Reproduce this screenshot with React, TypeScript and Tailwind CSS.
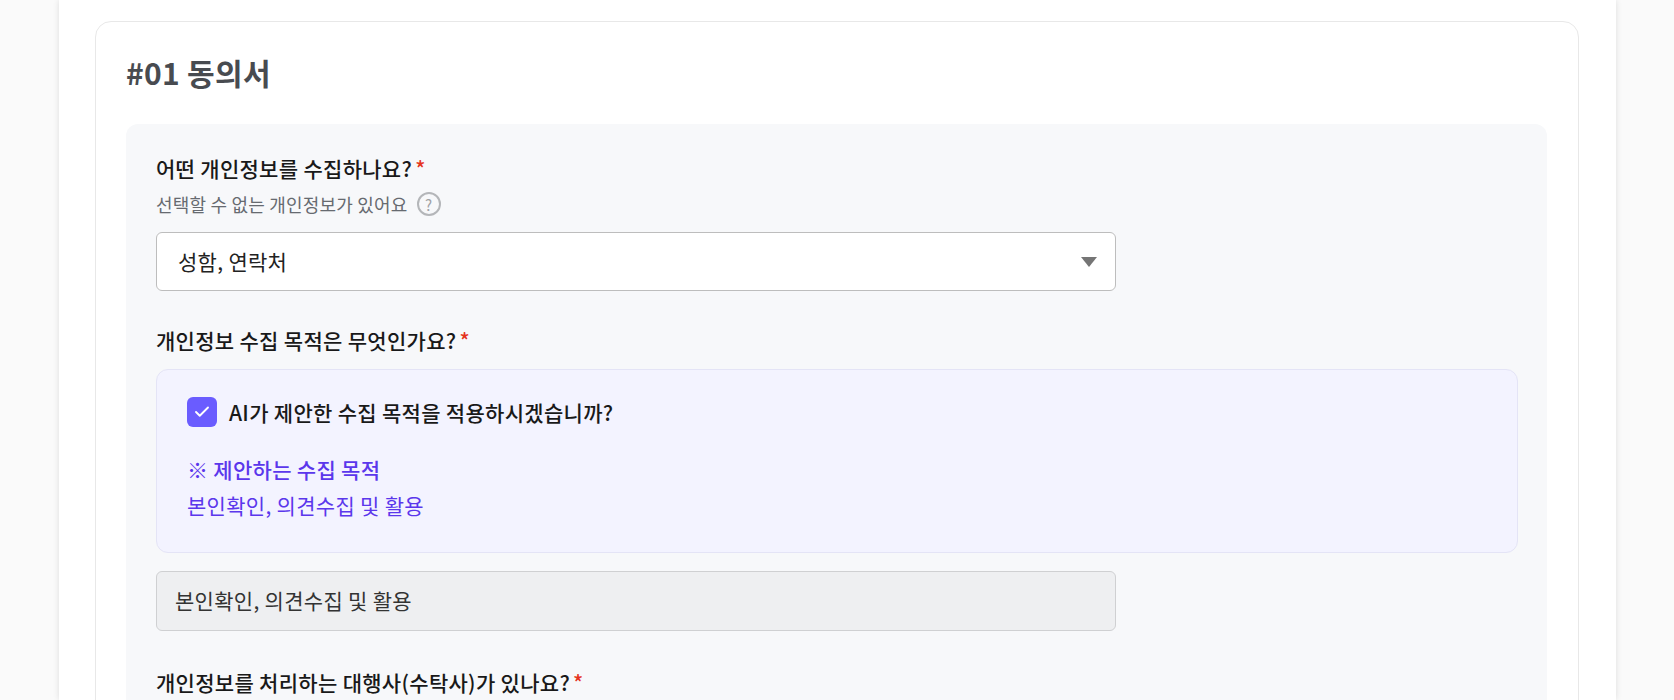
import React from 'react';
import { Check } from 'lucide-react';

const font = { fontFamily: '"Noto Sans CJK KR", "Noto Sans", sans-serif' };

const Label = ({ children }: { children: React.ReactNode }) => (
  <div className="flex items-start text-[21px] leading-[26px] font-medium tracking-[0.3px] text-[#191919]">
    <span>{children}</span>
    <span className="ml-[3px] text-[#e5341d]">*</span>
  </div>
);

const App = () => {
  return (
    <div className="h-[700px] overflow-hidden bg-[#fafafa] pl-[59px]" style={font}>
      <div className="h-[700px] w-[1557px] bg-white px-[36px] pt-[21px] shadow-[0_0_6px_rgba(0,0,0,0.12)]">
        <div className="h-[760px] w-[1484px] rounded-t-[16px] border border-[#e8e8e8] px-[30px] pt-[30px]">
          <h2 className="text-[30px] leading-[40px] font-bold tracking-[0.3px] text-[#484b50]">#01 동의서</h2>

          <div className="mt-[32px] h-[700px] w-[1421px] rounded-t-[12px] bg-[#f7f8fa] px-[30px] pt-[31px]">
            {/* 수집 항목 */}
            <Label>어떤 개인정보를 수집하나요?</Label>
            <div className="mt-[11px] flex h-[24px] items-center text-[18px] tracking-[0.2px] text-[#666a70]">
              <span>선택할 수 없는 개인정보가 있어요</span>
              <span className="ml-[9px] flex h-[24px] w-[24px] items-center justify-center rounded-full border-2 border-[#b4b6b9] text-[15px] leading-none text-[#a0a2a6]">?</span>
            </div>
            <div className="mt-[16px] flex h-[59px] w-[960px] items-center justify-between rounded-[6px] border border-[#bdbdbd] bg-white pr-[18px] pl-[21px] text-[21px] tracking-[0.3px] text-[#222]">
              <span>성함, 연락처</span>
              <svg width="16" height="10" viewBox="0 0 16 10"><path d="M0 0h16L8 10z" fill="#757575" /></svg>
            </div>

            {/* 수집 목적 */}
            <div className="mt-[36px]">
              <Label>개인정보 수집 목적은 무엇인가요?</Label>
            </div>
            <div className="mt-[16px] h-[184px] w-[1362px] rounded-[12px] border border-[#e4e4f6] bg-[#f3f3ff] px-[30px] pt-[27px]">
              <div className="flex items-center">
                <span className="flex h-[30px] w-[30px] items-center justify-center rounded-[6px] bg-[#6a5cff]">
                  <Check size={18} strokeWidth={2.5} color="#fff" />
                </span>
                <span className="ml-[12px] text-[21px] leading-[30px] font-medium tracking-[0.3px] text-[#191919]">AI가 제안한 수집 목적을 적용하시겠습니까?</span>
              </div>
              <p className="mt-[29px] text-[21px] leading-[26px] font-medium tracking-[0.3px] text-[#5b37ec]">※ 제안하는 수집 목적</p>
              <p className="mt-[10px] text-[21px] leading-[26px] tracking-[0.3px] text-[#5b37ec]">본인확인, 의견수집 및 활용</p>
            </div>
            <div className="mt-[18px] flex h-[60px] w-[960px] items-center rounded-[6px] border border-[#cfd0d2] bg-[#eeeff1] px-[18px] text-[21px] tracking-[0.3px] text-[#333]">
              본인확인, 의견수집 및 활용
            </div>

            {/* 수탁사 */}
            <div className="mt-[38px]">
              <Label>개인정보를 처리하는 대행사(수탁사)가 있나요?</Label>
            </div>
          </div>
        </div>
      </div>
    </div>
  );
};

export default App;
